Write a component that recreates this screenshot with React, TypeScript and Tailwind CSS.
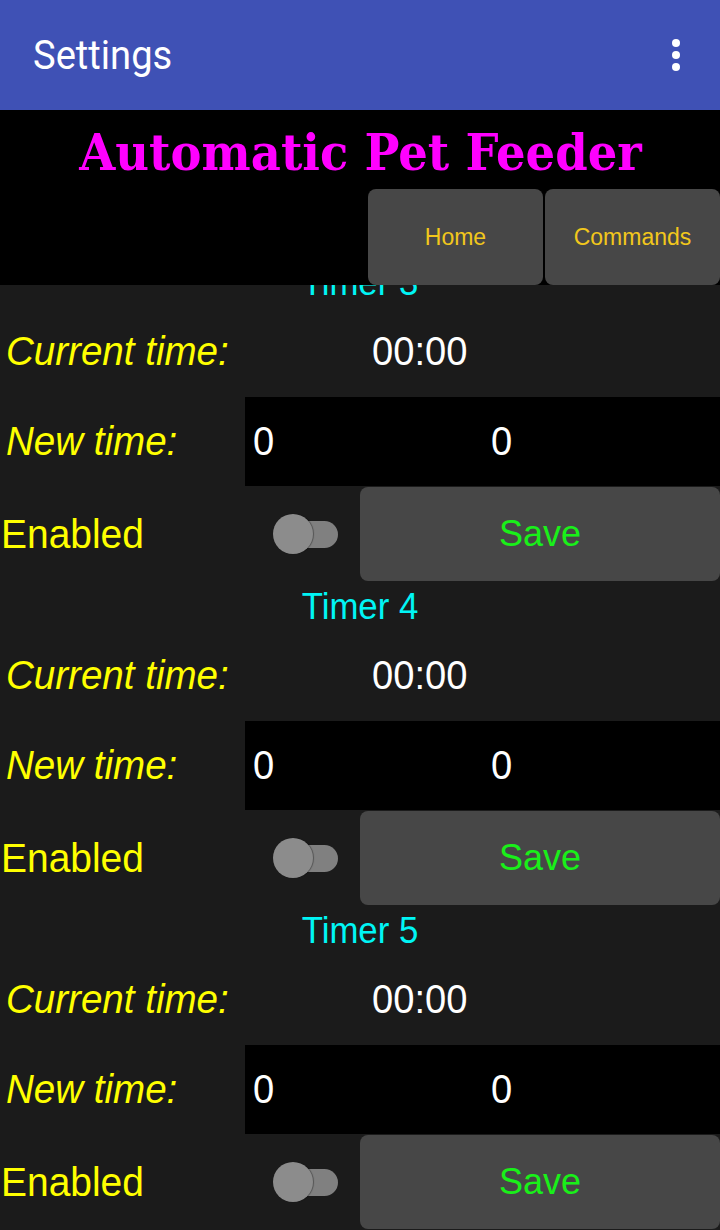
import React from "react";

const sans = { fontFamily: '"Liberation Sans", Arial, sans-serif' };

const Toggle = () => (
    <div className="relative w-[65px] h-[40px] shrink-0">
        <div className="absolute left-[12px] top-[7px] w-[53px] h-[27px] rounded-full bg-[#808080]" />
        <div className="absolute left-0 top-0 w-[40px] h-[40px] rounded-full bg-[#8c8c8c] shadow-[1px_0_1px_rgba(0,0,0,0.35)]" />
    </div>
);

const TimerBlock = ({ n }: { n: number }) => {
    return (
        <div style={sans}>
            <div className="h-[48px] flex items-center justify-center text-[37px] text-[#00f5f5] leading-none">
                <span className="inline-block scale-x-[0.94]">Timer {n}</span>
            </div>
            <div className="h-[91px] flex items-center text-[41px] leading-none">
                <div className="w-[372px] pl-[6px] text-[#ffff00] italic">
                    <span className="inline-block origin-left scale-x-[0.94]">Current time:</span>
                </div>
                <span className="inline-block origin-left scale-x-[0.93] text-white">00:00</span>
            </div>
            <div className="h-[89px] flex text-[41px] leading-none">
                <div className="w-[245px] pl-[6px] flex items-center text-[#ffff00] italic">
                    <span className="inline-block origin-left scale-x-[0.94]">New time:</span>
                </div>
                <div className="flex-1 bg-black flex items-center text-white">
                    <div className="w-1/2 pl-[8px]">
                        <span className="inline-block origin-left scale-x-[0.93]">0</span>
                    </div>
                    <div className="w-1/2 pl-[8px]">
                        <span className="inline-block origin-left scale-x-[0.93]">0</span>
                    </div>
                </div>
            </div>
            <div className="h-[96px] flex items-center">
                <div className="w-[273px] pl-[1px] text-[41px] leading-none text-[#ffff00]">
                    <span className="inline-block origin-left scale-x-[0.95]">Enabled</span>
                </div>
                <Toggle />
                <button className="ml-auto w-[360px] h-[94px] rounded-[8px] bg-[#474747] text-[36px] text-[#19f019]">
                    Save
                </button>
            </div>
        </div>
    );
};

export default function App() {
    return (
        <div className="w-[720px] h-[1230px] overflow-hidden flex flex-col bg-[#1b1b1b]">
            <div className="h-[110px] shrink-0 bg-[#3f51b5] flex items-center pl-[33px] pr-[40px]">
                <h1 className="text-[41px] text-white leading-none" style={{ fontFamily: "Roboto, sans-serif" }}>
                    <span className="inline-block origin-left scale-x-[0.93]">Settings</span>
                </h1>
                <div className="ml-auto flex flex-col gap-[4px]">
                    <span className="w-[8px] h-[8px] rounded-full bg-white" />
                    <span className="w-[8px] h-[8px] rounded-full bg-white" />
                    <span className="w-[8px] h-[8px] rounded-full bg-white" />
                </div>
            </div>
            <div className="h-[175px] shrink-0 bg-black flex flex-col">
                <div className="h-[79px] pt-[6px] flex items-center justify-center">
                    <span
                        className="inline-block text-[50px] font-bold text-[#ff00ff] leading-none scale-x-[0.93]"
                        style={{ fontFamily: '"DejaVu Serif", serif' }}
                    >
                        Automatic Pet Feeder
                    </span>
                </div>
                <div className="flex-1 flex justify-end gap-[2px]" style={sans}>
                    <button className="w-[175px] h-[96px] rounded-[8px] bg-[#474747] text-[23px] text-[#f2c71c]">Home</button>
                    <button className="w-[175px] h-[96px] rounded-[8px] bg-[#474747] text-[23px] text-[#f2c71c]">Commands</button>
                </div>
            </div>
            <div className="flex-1 overflow-hidden">
                <div className="-mt-[27px]">
                    {[3, 4, 5].map(n => (
                        <TimerBlock key={n} n={n} />
                    ))}
                </div>
            </div>
        </div>
    );
}
